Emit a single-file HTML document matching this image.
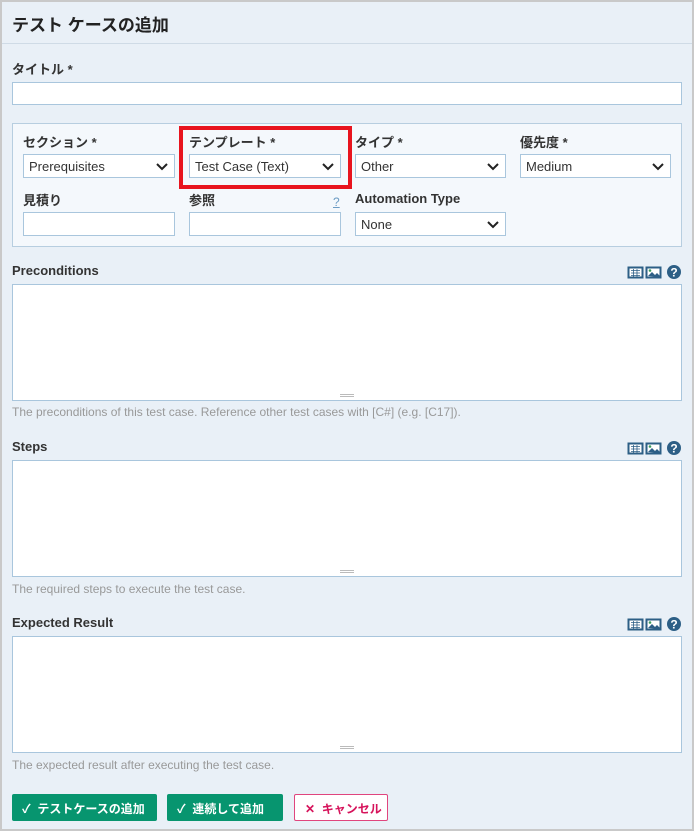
<!DOCTYPE html><html><head><meta charset="utf-8"><style>
*{box-sizing:border-box;margin:0;padding:0}
body{width:694px;height:831px;background:#c9c9c9;font-family:"Liberation Sans","Noto Sans CJK JP",sans-serif;color:#222;position:relative;overflow:hidden}
#f{position:absolute;left:2px;top:2px;width:690px;height:827px;background:#e9f0f7}
.a{position:absolute;white-space:nowrap}
.hdr{left:0;top:0;width:690px;height:42px;border-bottom:1px solid #cfdbe6}
.h1{left:10px;top:9px;font-size:17px;font-weight:bold;color:#222}
.lb{font-size:13px;font-weight:bold;color:#333}
.in{background:#fff;border:1px solid #a9c6dd}
.sel{background:#fff;border:1px solid #a9c6dd;font-size:13px;color:#333;padding:4px 0 0 5px}
.sel svg{position:absolute;right:6px;top:8px}
.box{left:10px;top:121px;width:670px;height:124px;background:#f4f8fc;border:1px solid #b7cee0}
.hint{font-size:12px;color:#999}
.btn{position:absolute;top:792px;height:27px;font-size:12px;font-weight:bold;color:#fff;background:#07956f;border-radius:2px;padding:6px 0 0 10px;white-space:nowrap}
.grip{position:absolute;left:50%;margin-left:-7px;bottom:3px;width:14px;height:3px;border-top:1px solid #bbb;border-bottom:1px solid #bbb}
</style></head><body><div id="f">
<div class="a hdr"></div>
<div class="a h1">テスト ケースの追加</div>
<div class="a lb" style="left:10px;top:57px">タイトル *</div>
<div class="a in" style="left:10px;top:80px;width:670px;height:23px"></div>
<div class="a box"></div>
<div class="a lb" style="left:21px;top:130px">セクション *</div>
<div class="a lb" style="left:187px;top:130px">テンプレート *</div>
<div class="a lb" style="left:353px;top:130px">タイプ *</div>
<div class="a lb" style="left:518px;top:130px">優先度 *</div>
<div class="a sel" style="left:21px;top:152px;width:152px;height:24px">Prerequisites<svg width="12" height="8"><path d="M1 1l5 5 5-5" stroke="#222" stroke-width="2" fill="none"/></svg></div>
<div class="a sel" style="left:187px;top:152px;width:152px;height:24px">Test Case (Text)<svg width="12" height="8"><path d="M1 1l5 5 5-5" stroke="#222" stroke-width="2" fill="none"/></svg></div>
<div class="a sel" style="left:353px;top:152px;width:151px;height:24px">Other<svg width="12" height="8"><path d="M1 1l5 5 5-5" stroke="#222" stroke-width="2" fill="none"/></svg></div>
<div class="a sel" style="left:518px;top:152px;width:151px;height:24px">Medium<svg width="12" height="8"><path d="M1 1l5 5 5-5" stroke="#222" stroke-width="2" fill="none"/></svg></div>
<div class="a" style="left:177px;top:124px;width:173px;height:63px;border:4px solid #e8141e"></div>
<div class="a lb" style="left:21px;top:188px">見積り</div>
<div class="a lb" style="left:187px;top:188px">参照</div>
<div class="a" style="left:331px;top:193px;font-size:12px;color:#6b9bc3;text-decoration:underline">?</div>
<div class="a lb" style="left:353px;top:189px">Automation Type</div>
<div class="a in" style="left:21px;top:210px;width:152px;height:24px"></div>
<div class="a in" style="left:187px;top:210px;width:152px;height:24px"></div>
<div class="a sel" style="left:353px;top:210px;width:151px;height:24px">None<svg width="12" height="8"><path d="M1 1l5 5 5-5" stroke="#222" stroke-width="2" fill="none"/></svg></div>

<div class="a lb" style="left:10px;top:261px">Preconditions</div>
<div class="a in" style="left:10px;top:282px;width:670px;height:117px"><div class="grip"></div></div>
<div class="a hint" style="left:10px;top:403px">The preconditions of this test case. Reference other test cases with [C#] (e.g. [C17]).</div>
<div class="a lb" style="left:10px;top:437px">Steps</div>
<div class="a in" style="left:10px;top:458px;width:670px;height:117px"><div class="grip"></div></div>
<div class="a hint" style="left:10px;top:580px">The required steps to execute the test case.</div>
<div class="a lb" style="left:10px;top:613px">Expected Result</div>
<div class="a in" style="left:10px;top:634px;width:670px;height:117px"><div class="grip"></div></div>
<div class="a hint" style="left:10px;top:756px">The expected result after executing the test case.</div>

<svg class="a" style="left:625px;top:262px" width="56" height="16"><g id="i"><rect x="1.5" y="3.5" width="14" height="10" fill="#fff" stroke="#2d5f86" stroke-width="2"/><path d="M4 6.5h9M4 9h9M4 11.5h9M6.5 5v8M10 5v8" stroke="#2d5f86" stroke-width=".8"/><rect x="19.5" y="3.5" width="14" height="10" fill="#fff" stroke="#2d5f86" stroke-width="2"/><path d="M21 12l4-4 3 3 2-2 3 3v1z" fill="#2d5f86"/><circle cx="23" cy="6.5" r="1.3" fill="#3b9a5a"/><circle cx="47" cy="8" r="7" fill="#2d5f86"/><text x="47" y="12.5" font-size="12" font-weight="bold" fill="#fff" text-anchor="middle" font-family="Liberation Sans">?</text></g></svg>
<svg class="a" style="left:625px;top:438px" width="56" height="16"><use href="#i"/></svg>
<svg class="a" style="left:625px;top:614px" width="56" height="16"><use href="#i"/></svg>

<div class="btn" style="left:10px;width:145px">✓&nbsp; テストケースの追加</div>
<div class="btn" style="left:165px;width:116px">✓&nbsp; 連続して追加</div>
<div class="btn" style="left:292px;width:94px;background:#fff;color:#d6135b;border:1px solid #e0457e;padding-top:5px">✕&nbsp; キャンセル</div>
</div></body></html>
